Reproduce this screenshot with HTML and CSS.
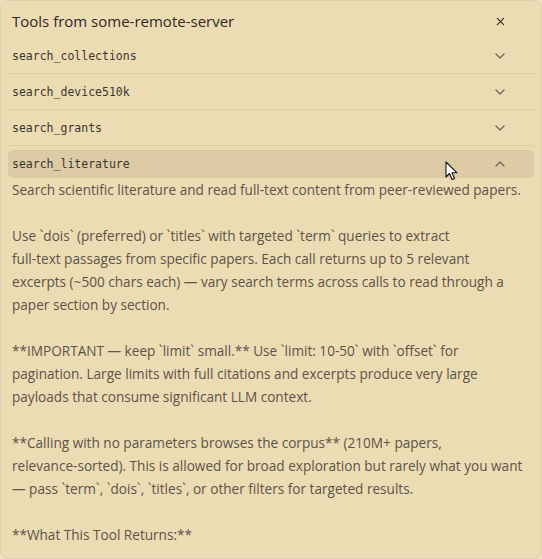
FILE: index.html
```html
<!DOCTYPE html>
<html lang="en">
<head>
  <meta charset="UTF-8">
  <title>Tools from some-remote-server</title>
  <link rel="stylesheet" href="styles.css">
</head>
<body>
  <div class="tools-panel">
    <div class="panel-header">
      <h1>Tools from some-remote-server</h1>
      <button class="close-button" aria-label="Close">
        <svg width="9" height="9" viewBox="0 0 10 10" fill="none" stroke="currentColor" stroke-width="1.4" stroke-linecap="round">
          <line x1="1.5" y1="1.5" x2="8.5" y2="8.5"></line>
          <line x1="8.5" y1="1.5" x2="1.5" y2="8.5"></line>
        </svg>
      </button>
    </div>

    <div class="tool-list">
      <div class="tool-row">
        <span class="tool-name">search_collections</span>
        <svg class="chevron" width="10" height="6" viewBox="0 0 10 6" fill="none" stroke="currentColor" stroke-width="1.3" stroke-linecap="round" stroke-linejoin="round"><polyline points="1 1 5 5 9 1"></polyline></svg>
      </div>
      <div class="tool-row">
        <span class="tool-name">search_device510k</span>
        <svg class="chevron" width="10" height="6" viewBox="0 0 10 6" fill="none" stroke="currentColor" stroke-width="1.3" stroke-linecap="round" stroke-linejoin="round"><polyline points="1 1 5 5 9 1"></polyline></svg>
      </div>
      <div class="tool-row">
        <span class="tool-name">search_grants</span>
        <svg class="chevron" width="10" height="6" viewBox="0 0 10 6" fill="none" stroke="currentColor" stroke-width="1.3" stroke-linecap="round" stroke-linejoin="round"><polyline points="1 1 5 5 9 1"></polyline></svg>
      </div>
      <div class="tool-row open">
        <span class="tool-name">search_literature</span>
        <svg class="chevron" width="10" height="6" viewBox="0 0 10 6" fill="none" stroke="currentColor" stroke-width="1.3" stroke-linecap="round" stroke-linejoin="round"><polyline points="1 5 5 1 9 5"></polyline></svg>
        <svg class="cursor" width="14" height="20" viewBox="0 0 14 20">
          <path d="M1 1 L1 16 L4.5 12.5 L7 18.5 L9.5 17.5 L7 11.8 L12 11.8 Z" fill="#fff" stroke="#111" stroke-width="1.1" stroke-linejoin="round"></path>
        </svg>
      </div>
      <div class="tool-description">Search scientific literature and read full-text content from peer-reviewed papers.

Use `dois` (preferred) or `titles` with targeted `term` queries to extract
full-text passages from specific papers. Each call returns up to 5 relevant
excerpts (~500 chars each) — vary search terms across calls to read through a
paper section by section.

**IMPORTANT — keep `limit` small.** Use `limit: 10-50` with `offset` for
pagination. Large limits with full citations and excerpts produce very large
payloads that consume significant LLM context.

**Calling with no parameters browses the corpus** (210M+ papers,
relevance-sorted). This is allowed for broad exploration but rarely what you want
— pass `term`, `dois`, `titles`, or other filters for targeted results.

**What This Tool Returns:**</div>
    </div>
  </div>
</body>
</html>
```

FILE: styles.css
```css
* {
  margin: 0;
  padding: 0;
  box-sizing: border-box;
}

:root {
  --bg-panel: #ecdcb3;
  --bg-active: #ddcba6;
  --line: #dccca8;
  --text-title: #2e2924;
  --text-mono: #3b352e;
  --text-body: #5c5349;
  --icon: #6e655a;
}

body {
  background-color: #efe2bf;
  font-family: 'Open Sans', 'Noto Sans', sans-serif;
  color: var(--text-body);
  width: 542px;
  height: 559px;
  overflow: hidden;
}

.tools-panel {
  width: 542px;
  height: 559px;
  background-color: var(--bg-panel);
  border: 1px solid #ddd0ae;
  border-radius: 8px;
  overflow: hidden;
}

.panel-header {
  height: 38px;
  padding: 2px 36px 0 11px;
  display: flex;
  align-items: center;
  justify-content: space-between;
}

.panel-header h1 {
  font-size: 15px;
  font-weight: 400;
  color: var(--text-title);
}

.close-button {
  background: none;
  border: none;
  color: #3a342d;
  display: flex;
  cursor: pointer;
}

.tool-list {
  display: flex;
  flex-direction: column;
}

.tool-row {
  height: 36px;
  margin: 0 7px;
  padding: 0 29px 0 4px;
  display: flex;
  align-items: center;
  justify-content: space-between;
  border-bottom: 1px solid var(--line);
  position: relative;
}

.tool-row:first-child {
  height: 35px;
}

.tool-row.open {
  height: 28px;
  margin-top: 4px;
  border-bottom: none;
  border-radius: 5px;
  background-color: var(--bg-active);
}

.tool-name {
  font-family: 'DejaVu Sans Mono', 'Liberation Mono', monospace;
  font-size: 11.5px;
  color: var(--text-mono);
}

.chevron {
  color: var(--icon);
}

.cursor {
  position: absolute;
  left: 437px;
  top: 11px;
}

.tool-description {
  padding: 0 12px 0 11px;
  font-size: 13.6px;
  line-height: 23px;
  white-space: pre;
  color: var(--text-body);
}
```
